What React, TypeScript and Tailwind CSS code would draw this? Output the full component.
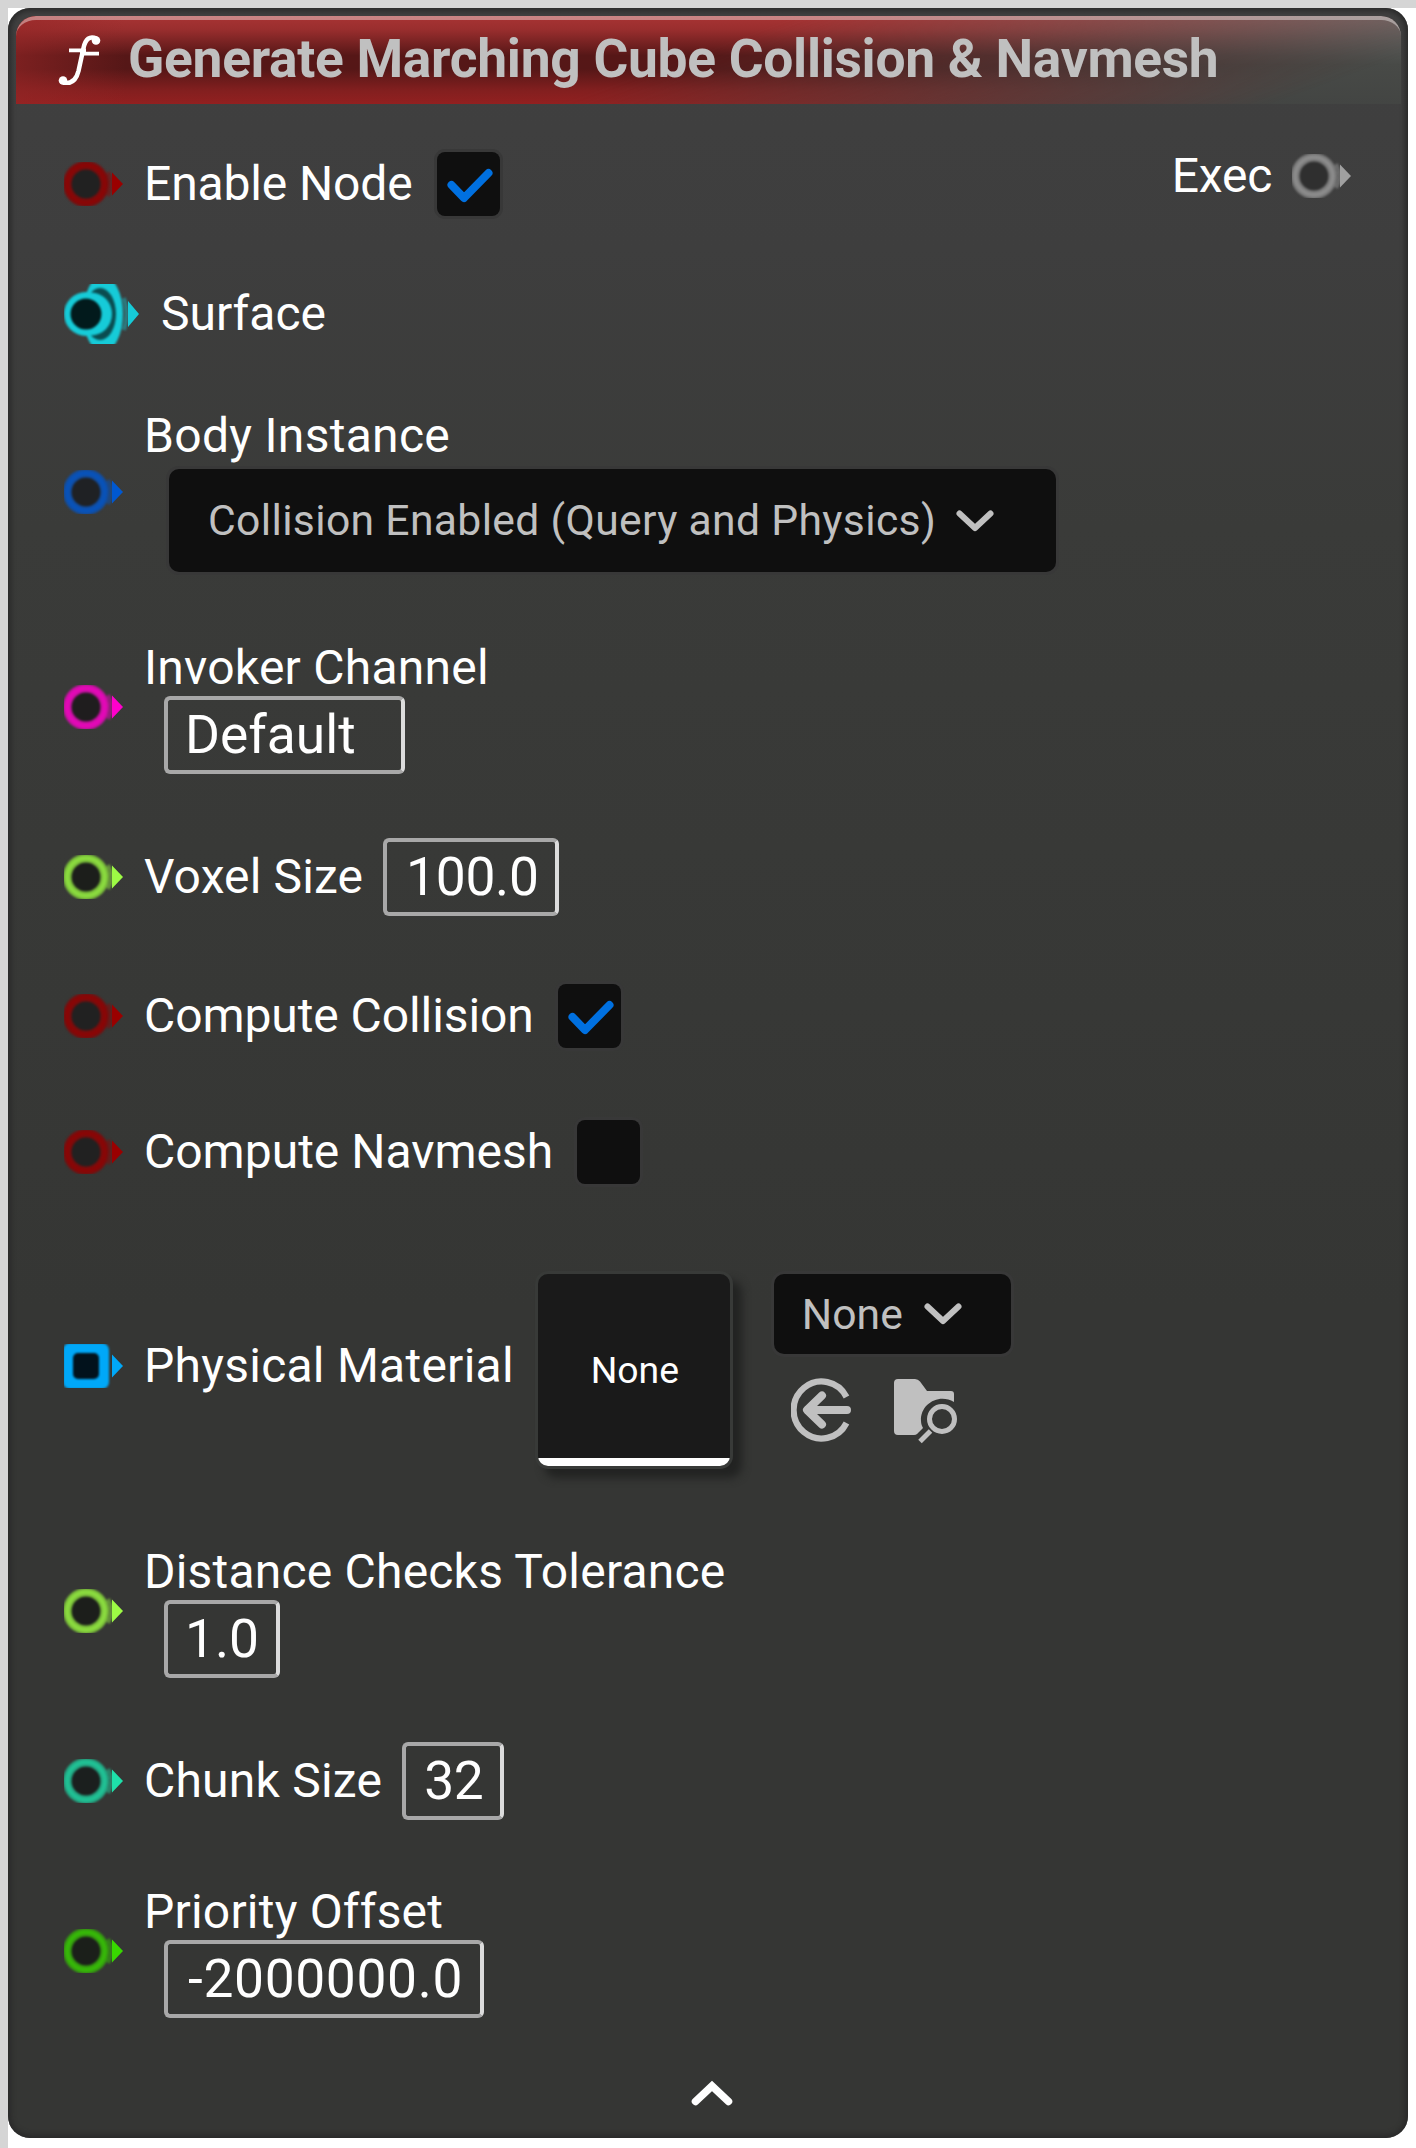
import React from "react";

type PinShape = "round" | "square";

function Pin({ color, ring, core, shape = "round" }: { color: string; ring: string; core: string; shape?: PinShape }) {
  return (
    <svg className="block h-[44px] w-[60px] shrink-0 overflow-hidden" viewBox="0 0 60 44">
      {shape === "round" ? (
        <g className="blur-[1.2px]">
          <circle cx="22" cy="22" r="23" fill={ring} />
          <circle cx="22" cy="22" r="18.8" fill="none" stroke={color} strokeOpacity="0.5" strokeWidth="3" />
          <circle cx="22" cy="22" r="14.5" fill={core} />
          <path d="M44 10 Q51 22 44 34" fill="none" stroke={color} strokeOpacity="0.45" strokeWidth="4" />
        </g>
      ) : (
        <g className="blur-[1px]">
          <rect x="-1" y="-1" width="46" height="46" rx="7" fill={ring} />
          <rect x="9" y="9" width="26" height="26" rx="5" fill={core} />
        </g>
      )}
      <path className="blur-[0.7px]" d="M48 10.5 L59 22 L48 33.5 Z" fill={color} />
    </svg>
  );
}

function SurfacePin() {
  return (
    <svg className="block h-[60px] w-[76px] shrink-0 overflow-hidden" viewBox="0 0 76 60">
      <g className="blur-[1px]">
        <ellipse cx="39" cy="30" rx="20" ry="38" fill="#16cbd8" />
        <ellipse cx="36" cy="30" rx="16" ry="26" fill="#0a4c50" />
        <ellipse cx="27" cy="30" rx="21" ry="21.5" fill="#16cbd8" />
        <circle cx="22" cy="30" r="22" fill="#16cbd8" />
        <circle cx="22" cy="30" r="15.5" fill="#021a1c" />
        <path d="M60 14 Q65 30 60 46" fill="none" stroke="#16cbd8" strokeOpacity="0.45" strokeWidth="4" />
      </g>
      <path className="blur-[0.7px]" d="M64 17 L75 30 L64 43 Z" fill="#16cbd8" />
    </svg>
  );
}

function Label({ children, className = "" }: { children: React.ReactNode; className?: string }) {
  return (
    <span className={"block h-[56px] text-[48px] leading-[56px] whitespace-nowrap text-white " + className}>{children}</span>
  );
}

function Checkbox({ checked }: { checked: boolean }) {
  return (
    <span className="block h-[64px] w-[63px] shrink-0 rounded-[8px] bg-[#0f0f0f] shadow-[0_0_0_3px_#383838]">
      {checked && (
        <svg className="block h-[64px] w-[63px]" viewBox="0 0 63 64">
          <path d="M14.5 33 L27 46 L51.5 21" fill="none" stroke="#0070e0" strokeWidth="8" strokeLinecap="round" strokeLinejoin="round" />
        </svg>
      )}
    </span>
  );
}

function Field({ children, className }: { children: React.ReactNode; className: string }) {
  return (
    <span
      className={
        "block h-[78px] shrink-0 rounded-[6px] border-4 border-[#a8a8a8] border-r-[#dcdcdc] text-[53.33px] leading-[70px] whitespace-nowrap text-white " +
        className
      }
    >
      {children}
    </span>
  );
}

function Chevron() {
  return (
    <svg className="block h-[24px] w-[40px] shrink-0" viewBox="0 0 40 24">
      <path d="M4.5 4.5 L20 19 L35.5 4.5" fill="none" stroke="#c0c0c0" strokeWidth="6" strokeLinecap="round" strokeLinejoin="round" />
    </svg>
  );
}

const RED = { color: "#9a0000", ring: "#7d0b0b", core: "#212121" };
const LIME = { color: "#9dfb45", ring: "#7cc23a", core: "#1c1e1b" };

export default function App() {
  return (
    <div className="h-[2148px] w-[1416px] bg-white font-['Roboto',sans-serif]">
      <div className="flex h-full w-full flex-col border-t-8 border-l-8 border-[#d5d5d5]">
        <div className="flex h-[2130px] w-[1400px] flex-col rounded-[22px] bg-[linear-gradient(180deg,#404040_0px,#3e3e3e_240px,#3a3b39_520px,#373836_1000px,#353634_1300px,#353634_100%)] shadow-[inset_0_0_5px_3px_#2a2a2a]">
          <header className="relative mt-[8px] ml-[8px] flex h-[88px] w-[1385px] items-center overflow-hidden rounded-t-[20px] bg-[linear-gradient(180deg,#6a6c6a,#484a47_55%,#434543)]">
            <div className="absolute inset-0 bg-[linear-gradient(180deg,#a83434_0%,#9a2e2e_15%,#561717_45%,#551717_60%,#831f1f_85%,#922020_100%)] [mask-image:linear-gradient(160deg,#000_48%,transparent_92%)]" />
            <div className="absolute inset-0 bg-[linear-gradient(90deg,#96262699_0px,#96262600_110px)]" />
            <div className="absolute inset-0 rounded-t-[20px] border-t-[4px] border-[#ffffff66]" />
            <svg className="relative ml-[42px] h-[50px] w-[43px] shrink-0" viewBox="0 0 43 50">
              <path d="M38.5 3.5 Q28.5 -1 25.5 13 L20.5 36 Q17 50 5 48" fill="none" stroke="#fff" strokeWidth="4.5" />
              <circle cx="38" cy="5.5" r="4.3" fill="#fff" />
              <circle cx="5" cy="45.5" r="4.3" fill="#fff" />
              <path d="M11 15.4 H28 M22 18.6 H41" stroke="#fff" strokeWidth="3.6" />
            </svg>
            <h1 className="relative -mt-[2px] ml-[27px] text-[53.33px] leading-[64px] font-bold tracking-[-0.3px] whitespace-nowrap text-[#c0c0c0]">
              Generate Marching Cube Collision &amp; Navmesh
            </h1>
          </header>

          <div className="flex justify-between pl-[56px]">
            <div className="flex flex-col items-start">
              <div className="mt-[48px] flex h-[64px] items-center">
                <Pin {...RED} />
                <div className="ml-[20px]"><Label className="tracking-[-0.13px]">Enable Node</Label></div>
                <div className="ml-[24px]"><Checkbox checked /></div>
              </div>

              <div className="mt-[68px] flex h-[60px] items-center">
                <SurfacePin />
                <div className="ml-[21px]"><Label>Surface</Label></div>
              </div>

              <div className="mt-[64px] flex h-[168px] items-center">
                <Pin color="#0058d0" ring="#0f4fa8" core="#1f2124" />
                <div className="ml-[20px] flex flex-col">
                  <Label className="tracking-[0.3px]">Body Instance</Label>
                  <div className="mt-[5px] mb-[4px] ml-[25px] flex h-[103px] w-[887px] items-center rounded-[10px] bg-[#0f0f0f] pl-[39px] shadow-[0_0_0_3px_#383838]">
                    <span className="-mt-[2px] text-[42.67px] leading-[50px] tracking-[0.33px] whitespace-nowrap text-[#c0c0c0]">
                      Collision Enabled (Query and Physics)
                    </span>
                    <div className="ml-[19px]"><Chevron /></div>
                  </div>
                </div>
              </div>

              <div className="mt-[64px] flex h-[134px] items-center">
                <Pin color="#ff00cc" ring="#cf0fa8" core="#1f1d1e" />
                <div className="ml-[20px] flex flex-col">
                  <Label className="tracking-[0.24px]">Invoker Channel</Label>
                  <Field className="ml-[20px] w-[241px] pl-[17px]">Default</Field>
                </div>
              </div>

              <div className="mt-[64px] flex h-[78px] items-center">
                <Pin {...LIME} />
                <div className="ml-[20px]"><Label className="tracking-[0.13px]">Voxel Size</Label></div>
                <Field className="ml-[20px] w-[176px] pl-[19px] tracking-[-0.3px]">100.0</Field>
              </div>

              <div className="mt-[68px] flex h-[64px] items-center">
                <Pin {...RED} />
                <div className="ml-[20px]"><Label className="tracking-[-0.08px]">Compute Collision</Label></div>
                <div className="ml-[24px]"><Checkbox checked /></div>
              </div>

              <div className="mt-[72px] flex h-[64px] items-center">
                <Pin {...RED} />
                <div className="ml-[20px]"><Label>Compute Navmesh</Label></div>
                <div className="ml-[24px]"><Checkbox checked={false} /></div>
              </div>

              <div className="mt-[78px] flex h-[208px] items-center">
                <Pin color="#00a8f8" ring="#00a8f8" core="#02121c" shape="square" />
                <div className="ml-[20px]"><Label className="tracking-[0.25px]">Physical Material</Label></div>
                <div className="mt-[8px] ml-[24px] h-[192px] w-[192px] shrink-0 rounded-[10px] shadow-[0_0_0_3px_#383a38,9px_9px_9px_3px_#222322]">
                  <div className="flex h-full w-full flex-col overflow-hidden rounded-[10px] bg-[#1a1a1a]">
                    <div className="flex h-[184px] items-center justify-center pt-[7px] pl-[2px]">
                      <span className="text-[37.33px] leading-[44px] text-white">None</span>
                    </div>
                    <div className="h-[8px] bg-white" />
                  </div>
                </div>
                <div className="mt-[8px] ml-[44px] flex h-[192px] flex-col">
                  <div className="flex h-[80px] w-[237px] items-center rounded-[10px] bg-[#0f0f0f] pl-[28px] shadow-[0_0_0_3px_#383838]">
                    <span className="text-[42.67px] leading-[50px] text-[#c0c0c0]">None</span>
                    <div className="ml-[20px]"><Chevron /></div>
                  </div>
                  <div className="mt-[24px] ml-[17px] flex">
                    <svg className="h-[64px] w-[64px]" viewBox="0 0 64 64" fill="none" stroke="#c0c0c0">
                      <path d="M55.5 19 A28 28.5 0 1 0 55.5 45" strokeWidth="6.2" />
                      <path d="M56 32 H19 M31 17.5 L16 32 L31 46.5" strokeWidth="8" strokeLinecap="round" strokeLinejoin="round" />
                    </svg>
                    <svg className="ml-[38px] h-[66px] w-[66px]" viewBox="0 0 66 66">
                      <path d="M5 1 H22 Q25 1 27 3.5 L34 13 H58 Q61 13 61 16 V24 C46 15 27 26 28 43 C28 46 29 48 30 50 L24 56 Q23 57 21 57 H5 Q1 57 1 53 V5 Q1 1 5 1 Z" fill="#c0c0c0" />
                      <circle cx="49" cy="41" r="12.5" fill="none" stroke="#c0c0c0" strokeWidth="5" />
                      <path d="M37.5 53 L27 63.5" stroke="#c0c0c0" strokeWidth="5" />
                    </svg>
                  </div>
                </div>
              </div>

              <div className="mt-[74px] flex h-[134px] items-center">
                <Pin {...LIME} />
                <div className="ml-[20px] flex flex-col">
                  <Label className="tracking-[0.2px]">Distance Checks Tolerance</Label>
                  <Field className="ml-[20px] w-[116px] pl-[17px]">1.0</Field>
                </div>
              </div>

              <div className="mt-[64px] flex h-[78px] items-center">
                <Pin color="#1ee0aa" ring="#22aa85" core="#1b1f1e" />
                <div className="ml-[20px]"><Label className="tracking-[0.22px]">Chunk Size</Label></div>
                <Field className="ml-[20px] w-[102px] pl-[18px] tracking-[-0.3px]">32</Field>
              </div>

              <div className="mt-[64px] flex h-[134px] items-center">
                <Pin color="#38d800" ring="#35a00e" core="#1b1f1a" />
                <div className="ml-[20px] flex flex-col">
                  <Label className="tracking-[0.2px]">Priority Offset</Label>
                  <Field className="ml-[20px] w-[320px] pl-[20px] tracking-[0.65px]">-2000000.0</Field>
                </div>
              </div>
            </div>

            <div className="mt-[44px] mr-[56px] -ml-[300px] flex h-[56px] items-center">
              <Label className="tracking-[-0.25px]">Exec</Label>
              <div className="ml-[20px]"><Pin color="#a0a0a0" ring="#7c7c7c" core="#2f2f2f" /></div>
            </div>
          </div>

          <div className="mt-[61px] flex justify-center pl-[8px]">
            <svg className="block h-[30px] w-[42px]" viewBox="0 0 42 30">
              <path d="M4.5 22.5 L21 7 L37.5 22.5" fill="none" stroke="#fff" strokeWidth="7.5" strokeLinecap="round" />
            </svg>
          </div>
        </div>
      </div>
    </div>
  );
}
